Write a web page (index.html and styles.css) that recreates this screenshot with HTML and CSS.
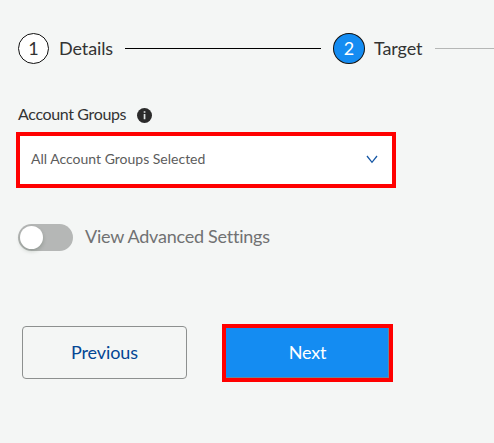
FILE: index.html
```html
<!DOCTYPE html>
<html lang="en">
<head>
<meta charset="utf-8">
<title>Target</title>
<link rel="stylesheet" href="styles.css">
</head>
<body>
<main class="page">
  <ol class="steps">
    <li class="step"><span class="badge">1</span><span class="step-label">Details</span></li>
    <li class="line"></li>
    <li class="step"><span class="badge badge-active">2</span><span class="step-label target-label">Target</span></li>
    <li class="line line-pending"></li>
  </ol>
  <div class="field-label">
    <span class="label-text">Account Groups</span>
    <svg class="info" viewBox="0 0 15 15"><circle cx="7.5" cy="7.5" r="7.5" fill="#2b2b2b"/><path d="M6.7 3.2h1.7v1.6H6.7zM6.7 6h1.7v5.2H6.7z" fill="#dfe3e3"/></svg>
  </div>
  <div class="select">
    <span class="select-text">All Account Groups Selected</span>
    <svg class="chevron" viewBox="0 0 12 9"><path d="M1 1l5 6.3L11 1" fill="none" stroke="#1557a5" stroke-width="1.3"/></svg>
  </div>
  <div class="setting">
    <span class="toggle"><span class="knob"></span></span>
    <span class="setting-text">View Advanced Settings</span>
  </div>
  <div class="actions">
    <button class="btn previous"><span>Previous</span></button>
    <button class="btn next"><span>Next</span></button>
  </div>
</main>
</body>
</html>
```

FILE: styles.css
```css
* { box-sizing: border-box; }
body {
  margin: 0;
  background: #f4f6f5;
  font-family: Lato, "Liberation Sans", sans-serif;
  font-variant-ligatures: none;
  color: #333;
}
.page {
  height: 443px;
  padding: 33px 0 0 16px;
  overflow: hidden;
}
.steps {
  display: flex;
  align-items: center;
  height: 31px;
  margin: 0;
  padding: 0 0 0 2px;
  list-style: none;
}
.step {
  display: flex;
  flex: none;
  align-items: center;
  gap: 10px;
  width: 107px;
  font-size: 18px;
  line-height: 31px;
  white-space: nowrap;
}
.step-label { letter-spacing: -0.1px; }
.badge {
  display: flex;
  flex: none;
  align-items: center;
  justify-content: center;
  width: 31px;
  height: 31px;
  border: 1px solid #111;
  border-radius: 50%;
  background: #fff;
  line-height: 29px;
}
.badge-active {
  width: 32px;
  background: #148cf2;
  color: #fff;
}
.target-label { margin-left: -1px; }
.line {
  flex: none;
  width: 196px;
  height: 1px;
  margin-right: 12px;
  background: #000;
}
.line-pending {
  width: 80px;
  margin: 0 0 0 -5px;
  background: #b5b7b6;
}
.field-label {
  display: flex;
  align-items: center;
  height: 22px;
  margin-top: 40px;
  padding-left: 2px;
  gap: 11px;
  font-size: 16px;
  line-height: 22px;
}
.label-text {
  padding-bottom: 2px;
  letter-spacing: -0.36px;
}
.info { width: 15px; height: 15px; }
.select {
  display: flex;
  align-items: center;
  justify-content: space-between;
  width: 380px;
  height: 56px;
  margin-top: 6px;
  padding: 0 14px 0 11px;
  border: 4px solid #f00;
  background: #fff;
  color: #5c5c5c;
  font-size: 14px;
}
.select-text { padding-bottom: 3px; }
.chevron { width: 12px; height: 9px; margin-bottom: 2px; }
.setting {
  display: flex;
  align-items: center;
  height: 27px;
  margin-top: 36px;
  padding-left: 2px;
  gap: 12px;
  color: #707172;
  font-size: 18px;
}
.setting-text {
  padding-bottom: 3px;
  letter-spacing: -0.24px;
}
.toggle {
  width: 55px;
  height: 27px;
  padding: 2px;
  border-radius: 14px;
  background: #b5b7b6;
}
.knob {
  display: block;
  width: 23px;
  height: 23px;
  border-radius: 50%;
  background: #fff;
  box-shadow: 0 2px 4px rgba(0, 35, 11, .2);
}
.actions {
  display: flex;
  align-items: flex-start;
  gap: 35px;
  margin-top: 73px;
  padding-left: 6px;
}
.btn {
  padding: 0 0 1px;
  font-family: inherit;
  font-size: 18px;
  font-variant-ligatures: none;
}
.previous {
  width: 165px;
  height: 53px;
  margin-top: 2px;
  border: 1px solid #8d908f;
  border-radius: 4px;
  background: transparent;
  color: #034694;
  letter-spacing: -0.1px;
}
.next {
  width: 171px;
  height: 58px;
  padding-bottom: 2px;
  border: 4px solid #f00;
  background: #148cf2;
  box-shadow: inset -1px -1px 0 #6b8798;
  color: #fff;
  letter-spacing: -0.2px;
}
```
